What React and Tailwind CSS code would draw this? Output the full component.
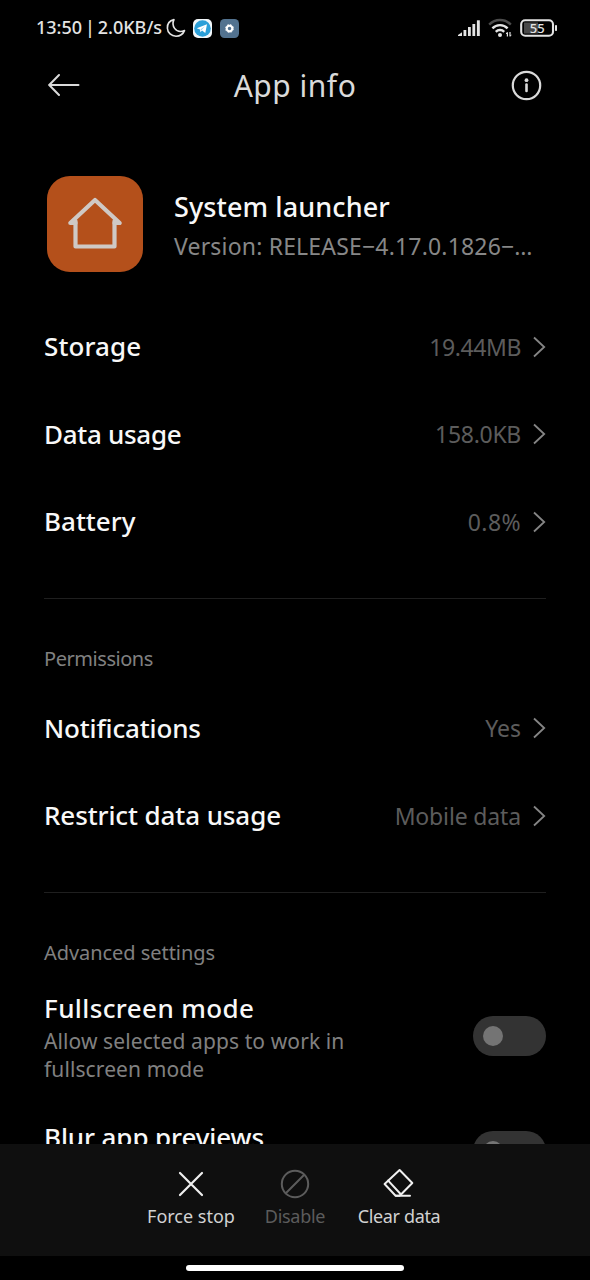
const usageRows = [
  { label: 'Storage', value: '19.44MB', labelClass: 'tracking-[0.1px]', valueClass: 'tracking-[-0.4px]' },
  { label: 'Data usage', value: '158.0KB', labelClass: 'tracking-[-0.3px]', valueClass: 'tracking-[-0.3px]' },
  { label: 'Battery', value: '0.8%', labelClass: 'tracking-[0px]', valueClass: 'tracking-[0.4px]' },
];

const permissionRows = [
  { label: 'Notifications', value: 'Yes', labelClass: 'tracking-[-0.15px]', valueClass: 'tracking-[0px]' },
  { label: 'Restrict data usage', value: 'Mobile data', labelClass: 'tracking-[-0.1px]', valueClass: 'tracking-[-0.15px]' },
];

const StatusBar = () => (
  <div className="flex h-14 shrink-0 items-center justify-between pl-9 pr-8 text-[#e4e4e4]">
    <div className="flex items-center">
      <span className="w-[127px] whitespace-nowrap pb-0.5 text-[18px] font-medium leading-6 [word-spacing:-1.8px]">13:50 | 2.0KB/s</span>
      {/* Do not disturb */}
      <svg className="ml-[3px]" width="20" height="20" viewBox="0 0 20 20" fill="none" stroke="currentColor" strokeWidth="1.6" strokeLinejoin="round">
        <path d="M8 1.6C3.5 2.6 1.2 6.2 1.4 10.2C1.6 14.8 5.4 18.2 10 18.2C13.8 18.2 17 16.2 18.5 12.6C14.5 14.2 10.6 13.2 8.6 10.4C6.8 7.8 6.6 4.4 8 1.6Z" />
      </svg>
      {/* Telegram */}
      <svg className="ml-[7px]" width="19" height="19" viewBox="0 0 19 19">
        <rect width="19" height="19" rx="5" fill="#f2f7fa" />
        <circle cx="9.5" cy="9.5" r="8.3" fill="#2b9fd8" />
        <path d="M3.8 9.3L14 5.2L12.3 14L9 11.5L7.4 13.2L7 10.4Z" fill="#fff" />
        <path d="M7.4 10.5L11.9 7.3L8.5 11.1Z" fill="#8cc6e6" />
      </svg>
      <svg className="ml-2" width="19" height="19" viewBox="0 0 19 19">
        <rect width="19" height="19" rx="4.5" fill="#52728f" />
        <circle cx="9.5" cy="9.5" r="3.9" fill="none" stroke="#fff" strokeWidth="1" strokeDasharray="1.8 1.26" />
        <circle cx="9.5" cy="9.5" r="2.7" fill="none" stroke="#fff" strokeWidth="1.9" />
      </svg>
    </div>
    <div className="flex items-center">
      <svg width="22" height="16" viewBox="0 0 22 16" fill="currentColor">
        <path d="M0 16V15L4 12.3V16Z" />
        <rect x="5.5" y="10" width="2.8" height="6" />
        <rect x="10" y="7" width="2.8" height="9" />
        <rect x="14.4" y="4" width="2.8" height="12" />
        <rect x="18.9" y="0.3" width="2.9" height="15.7" />
      </svg>
      <svg className="ml-2" width="24" height="20" viewBox="0 0 24 20" fill="none" strokeWidth="2.4">
        <path d="M1.2 6.6A15 15 0 0 1 22.8 6.6" stroke="#4c4c4c" />
        <path d="M4.4 10.4A10.4 10.4 0 0 1 19.6 10.4" stroke="currentColor" />
        <path d="M7.8 13.8A5.8 5.8 0 0 1 16.2 13.8" stroke="currentColor" />
        <circle cx="12" cy="17" r="2" fill="currentColor" />
        <path d="M19.4 14.6V18.6M22 14V18" stroke="currentColor" strokeWidth="1.2" />
        <path d="M18.2 16L19.4 14.2M23.2 16.8L22 18.6" stroke="currentColor" strokeWidth="1" />
      </svg>
      <svg className="ml-2" width="38" height="18" viewBox="0 0 38 18" fill="none">
        <rect x="4" y="3.5" width="14" height="11" fill="#484848" />
        <rect x="1.2" y="1.2" width="31.8" height="15.6" rx="4" stroke="currentColor" strokeWidth="2.1" />
        <rect x="35" y="6" width="2" height="6" rx="0.8" fill="currentColor" />
        <text x="17.2" y="13.6" textAnchor="middle" className="font-medium" fontSize="13" fill="currentColor">55</text>
      </svg>
    </div>
  </div>
);

const Header = () => (
  <header className="grid h-[58px] shrink-0 grid-cols-3 items-center px-12 text-[#dadada]">
    <svg width="32" height="24" viewBox="0 0 32 24" fill="none" stroke="currentColor" strokeWidth="2" strokeLinecap="round">
      <path d="M11 2L1.2 12L11 22M1.2 12H30.5" />
    </svg>
    <h1 className="whitespace-nowrap pt-0.5 text-center text-[30px] leading-10 tracking-[0.5px]">App info</h1>
    <svg className="justify-self-end" width="31" height="31" viewBox="0 0 31 31" fill="none" stroke="currentColor" strokeWidth="2.2" strokeLinecap="round">
      <circle cx="15.5" cy="15.5" r="13.7" />
      <path d="M15.5 14.6V21" strokeWidth="2.6" />
      <circle cx="15.5" cy="10.2" r="1.9" fill="currentColor" stroke="none" />
    </svg>
  </header>
);

const Chevron = () => (
  <svg className="ml-[11px] shrink-0" width="14" height="22" viewBox="0 0 14 22" fill="none" stroke="#858585" strokeWidth="1.8">
    <path d="M2 1.5L12.2 11L2 20.5" />
  </svg>
);

const InfoRow = ({ label, value, labelClass, valueClass }) => (
  <div className="flex h-[87.5px] items-center">
    <span className={`flex-1 text-[26px] font-medium ${labelClass}`}>{label}</span>
    <span className={`text-[23px] text-[#5c5c5c] ${valueClass}`}>{value}</span>
    <Chevron />
  </div>
);

const Section = ({ title, titleClass, children }) => (
  <section className="mt-8 border-t border-[#1f1f1f] pt-[46px]">
    <h2 className={`text-[20px] leading-7 text-[#808080] ${titleClass}`}>{title}</h2>
    {children}
  </section>
);

const ToggleRow = ({ title, titleClass, description }) => (
  <div className="flex h-[115px] items-center justify-between">
    <div className={description ? '' : 'pb-7'}>
      <div className={`text-[26px] font-medium leading-9 ${titleClass}`}>{title}</div>
      {description && (
        <p className="w-[330px] pt-px text-[21px] leading-7 tracking-[0.1px] text-[#808080]">{description}</p>
      )}
    </div>
    <div className="flex h-10 w-[73px] items-center rounded-full bg-[#333] pl-2.5">
      <div className="size-5 rounded-full bg-[#747474]" />
    </div>
  </div>
);

const Action = ({ label, className, children }) => (
  <div className={`flex w-[104px] flex-col items-center whitespace-nowrap ${className}`}>
    <svg width="32" height="32" viewBox="0 0 32 32" fill="none" stroke="currentColor" strokeWidth="2" strokeLinecap="round" strokeLinejoin="round">
      {children}
    </svg>
    <span className="mt-1 text-[18px] leading-6">{label}</span>
  </div>
);

export default function App() {
  return (
    <div className="flex h-[1280px] w-[590px] flex-col overflow-hidden bg-black font-['Noto_Sans',sans-serif] text-[#f8f8f8]">
      <StatusBar />
      <Header />

      <main className="min-h-0 flex-1 overflow-hidden px-11 pt-[62px]">
        <div className="mb-[31px] ml-[3px] flex h-24 items-center">
          <div className="flex size-24 shrink-0 items-center justify-center rounded-[23px] bg-[#b4501b]">
            <svg width="56" height="54" viewBox="0 0 56 54" fill="none" stroke="#cfc9c5" strokeWidth="4.2" strokeLinecap="round" strokeLinejoin="round">
              <path d="M8.5 26H3.3L28 3L52.7 26H47.5" />
              <path d="M8.5 24V49.5H47.5V24" />
            </svg>
          </div>
          <div className="ml-[31px] min-w-0 pt-1">
            <div className="text-[27px] font-medium leading-10 tracking-[0.1px]">System launcher</div>
            <div className="whitespace-nowrap text-[23px] leading-[38px] tracking-[0.18px] text-[#878787]">Version: RELEASE−4.17.0.1826−…</div>
          </div>
        </div>

        {usageRows.map((row) => (
          <InfoRow key={row.label} {...row} />
        ))}

        <Section title="Permissions" titleClass="tracking-[-0.45px]">
          <div className="mt-3">
            {permissionRows.map((row) => (
              <InfoRow key={row.label} {...row} />
            ))}
          </div>
        </Section>

        <Section title="Advanced settings" titleClass="tracking-[-0.05px]">
          <div className="mt-3">
            <ToggleRow title="Fullscreen mode" titleClass="tracking-[0.4px]" description="Allow selected apps to work in fullscreen mode" />
            <ToggleRow title="Blur app previews" titleClass="tracking-[-0.1px]" />
          </div>
        </Section>
      </main>

      <footer className="flex h-28 shrink-0 justify-center bg-[#0f0f0f] pt-6">
        <Action label="Force stop" className="text-[#d2d2d2]">
          <path d="M5 5L27 27M27 5L5 27" stroke="#f0f0f0" strokeWidth="2.2" />
        </Action>
        <Action label="Disable" className="tracking-[-0.3px] text-[#5c5c5c]">
          <circle cx="16" cy="16" r="13.2" />
          <path d="M6.8 25.2L25.2 6.8" />
        </Action>
        <Action label="Clear data" className="tracking-[-0.35px] text-[#d2d2d2]">
          <g stroke="#f0f0f0">
            <path d="M16.6 2L29.3 15L18 26.5L16.5 27.7H12.6L1.6 16Z" />
            <path d="M5.2 12.6L18 26.5M13 27.7H27" />
          </g>
        </Action>
      </footer>

      <div className="flex h-6 shrink-0 items-center justify-center">
        <div className="h-1.5 w-[218px] rounded-full bg-white" />
      </div>
    </div>
  );
}
